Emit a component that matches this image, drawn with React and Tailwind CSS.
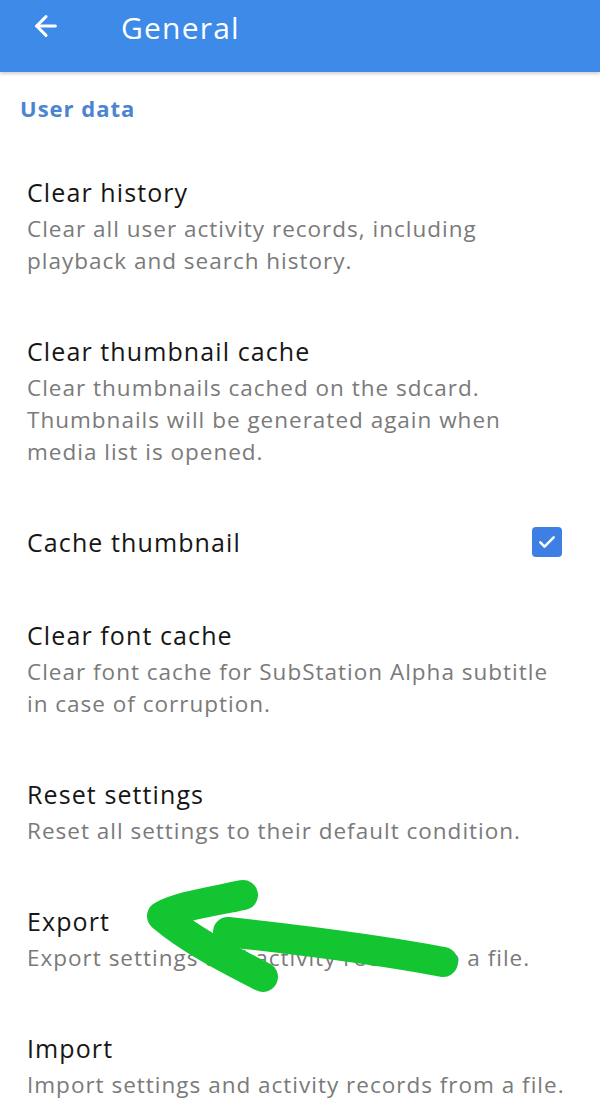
import { ArrowLeft } from "lucide-react";

const items = [
  {
    title: "Clear history",
    desc: ["Clear all user activity records, including", "playback and search history."],
  },
  {
    title: "Clear thumbnail cache",
    desc: [
      "Clear thumbnails cached on the sdcard.",
      "Thumbnails will be generated again when",
      "media list is opened.",
    ],
  },
  { title: "Cache thumbnail", checkbox: true },
  {
    title: "Clear font cache",
    desc: ["Clear font cache for SubStation Alpha subtitle", "in case of corruption."],
  },
  {
    title: "Reset settings",
    desc: ["Reset all settings to their default condition."],
  },
  {
    title: "Export",
    desc: ["Export settings and activity records to a file."],
  },
  {
    title: "Import",
    desc: ["Import settings and activity records from a file."],
  },
];

// one row of the preference list
const PrefItem = ({ item }) => {
  if (item.checkbox) {
    return (
      <div className="flex items-center justify-between pl-[27px] pr-[38px] pt-[27px] pb-[24px]">
        <div className="text-[25px] leading-[42px] tracking-[1.1px] text-[#161616]">{item.title}</div>
        <div className="flex h-[30px] w-[30px] items-center justify-center rounded-[4px] bg-[#3d7fe2]">
          <svg width="20" height="20" viewBox="0 0 24 24" fill="none">
            <path
              d="M4 12.5l5 5L20 6.5"
              stroke="white"
              strokeWidth="3"
              strokeLinecap="round"
              strokeLinejoin="round"
            />
          </svg>
        </div>
      </div>
    );
  }
  return (
    <div className="pl-[27px] pr-4 pt-[27px] pb-[26px]">
      <div className="text-[25px] leading-[42px] tracking-[1.1px] text-[#161616]">{item.title}</div>
      <div className="text-[22.5px] leading-[32px] tracking-[1px] text-[#7a7a7a]">
        {item.desc.map((line) => (
          <div key={line} className="whitespace-nowrap">
            {line}
          </div>
        ))}
      </div>
    </div>
  );
};

const App = () => {
  return (
    <div className="relative h-[1116px] w-[600px] overflow-hidden bg-white font-['Open_Sans','Noto_Sans',sans-serif]">
      <div className="flex h-[72px] items-center bg-[#3d8ae8] shadow-[0_2px_3px_rgba(0,0,0,0.18)]">
        <ArrowLeft className="ml-[30px] mt-[-20px] text-white" size={32} strokeWidth={2.3} />
        <div className="ml-[59px] mt-[-18px] text-[30px] tracking-[1.2px] text-white">General</div>
      </div>

      <div className="absolute top-0 pl-[20px] pt-[93px] text-[22px] font-bold leading-[30px] tracking-[1px] text-[#4a84d2]">
        User data
      </div>

      <div className="pt-[72px]">
        {items.map((item) => (
          <PrefItem key={item.title} item={item} />
        ))}
      </div>

      {/* green arrow scribbled over the Export row */}
      <svg
        className="pointer-events-none absolute left-0 top-0"
        width="600"
        height="1116"
        viewBox="0 0 600 1116"
        fill="none"
      >
        <g stroke="#14c532" strokeLinecap="round" strokeLinejoin="round">
          <path d="M243 895 C210 902 180 906 162 916 C190 940 230 960 263 977" strokeWidth="30" />
          <path d="M228 932 C300 940 380 950 443 962" strokeWidth="30" />
        </g>
      </svg>
    </div>
  );
};

export default App;
